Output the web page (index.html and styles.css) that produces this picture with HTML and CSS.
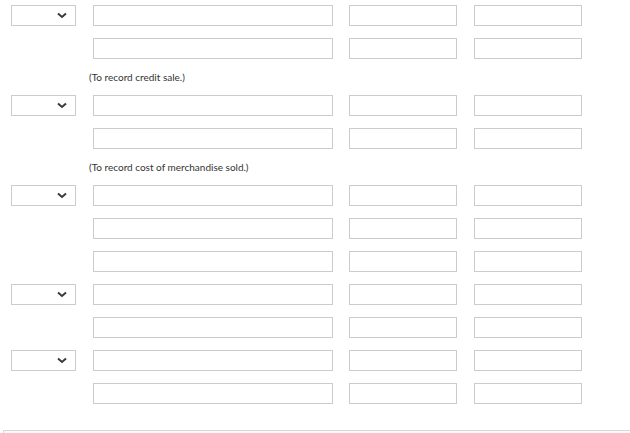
FILE: index.html
```html
<!DOCTYPE html>
<html>
<head>
<meta charset="utf-8">
<link rel="stylesheet" href="styles.css">
</head>
<body>
<div class="sheet">
  <div class="group">
    <div class="row">
      <div class="select"><svg class="chev" width="10" height="7" viewBox="0 0 10 7"><path d="M1 1.5 L5 5 L9 1.5" fill="none" stroke="#3a3a3a" stroke-width="2"/></svg></div>
      <input class="field wide"><input class="field num"><input class="field num">
    </div>
    <div class="row">
      <div class="spacer"></div>
      <input class="field wide"><input class="field num"><input class="field num">
    </div>
    <div class="note">(To record credit sale.)</div>
  </div>
  <div class="group">
    <div class="row">
      <div class="select"><svg class="chev" width="10" height="7" viewBox="0 0 10 7"><path d="M1 1.5 L5 5 L9 1.5" fill="none" stroke="#3a3a3a" stroke-width="2"/></svg></div>
      <input class="field wide"><input class="field num"><input class="field num">
    </div>
    <div class="row">
      <div class="spacer"></div>
      <input class="field wide"><input class="field num"><input class="field num">
    </div>
    <div class="note">(To record cost of merchandise sold.)</div>
  </div>
  <div class="group">
    <div class="row">
      <div class="select"><svg class="chev" width="10" height="7" viewBox="0 0 10 7"><path d="M1 1.5 L5 5 L9 1.5" fill="none" stroke="#3a3a3a" stroke-width="2"/></svg></div>
      <input class="field wide"><input class="field num"><input class="field num">
    </div>
    <div class="row">
      <div class="spacer"></div>
      <input class="field wide"><input class="field num"><input class="field num">
    </div>
    <div class="row">
      <div class="spacer"></div>
      <input class="field wide"><input class="field num"><input class="field num">
    </div>
  </div>
  <div class="group shifted">
    <div class="row">
      <div class="select"><svg class="chev" width="10" height="7" viewBox="0 0 10 7"><path d="M1 1.5 L5 5 L9 1.5" fill="none" stroke="#3a3a3a" stroke-width="2"/></svg></div>
      <input class="field wide"><input class="field num"><input class="field num">
    </div>
    <div class="row">
      <div class="spacer"></div>
      <input class="field wide"><input class="field num"><input class="field num">
    </div>
  </div>
  <div class="group">
    <div class="row">
      <div class="select"><svg class="chev" width="10" height="7" viewBox="0 0 10 7"><path d="M1 1.5 L5 5 L9 1.5" fill="none" stroke="#3a3a3a" stroke-width="2"/></svg></div>
      <input class="field wide"><input class="field num"><input class="field num">
    </div>
    <div class="row">
      <div class="spacer"></div>
      <input class="field wide"><input class="field num"><input class="field num">
    </div>
  </div>
</div>
<div class="footer-box"></div>
</body>
</html>
```

FILE: styles.css
```css
html, body {
  margin: 0;
  padding: 0;
  background: #ffffff;
  height: 433px;
  overflow: hidden;
}
body {
  font-family: Lato, "Liberation Sans", sans-serif;
  position: relative;
}
.sheet {
  padding: 5px 0 0 11px;
  height: 425px;
}
.row {
  display: flex;
  align-items: center;
  height: 21px;
  margin-bottom: 12px;
}
.shifted {
  margin-top: 1px;
}
.select {
  box-sizing: border-box;
  width: 65px;
  height: 21px;
  border: 1px solid #cccccc;
  background: #ffffff;
  position: relative;
  margin-right: 17px;
}
.chev {
  position: absolute;
  right: 8px;
  top: 6px;
}
.spacer {
  width: 65px;
  height: 21px;
  margin-right: 17px;
}
.field {
  box-sizing: border-box;
  height: 21px;
  border: 1px solid #cccccc;
  border-radius: 0;
  background: #ffffff;
  padding: 0;
  margin: 0;
  outline: none;
}
.wide {
  width: 240px;
  margin-right: 16px;
}
.num {
  width: 108px;
  margin-right: 17px;
}
.note {
  font-size: 10px;
  line-height: 12px;
  height: 12px;
  color: #333333;
  padding-left: 78px;
  margin-bottom: 12px;
}
.footer-box {
  position: absolute;
  left: 3px;
  right: 0;
  top: 430px;
  height: 10px;
  border-top: 1px solid #d8d8d8;
  border-left: 1px solid #d8d8d8;
  background: #fafafa;
}
```
